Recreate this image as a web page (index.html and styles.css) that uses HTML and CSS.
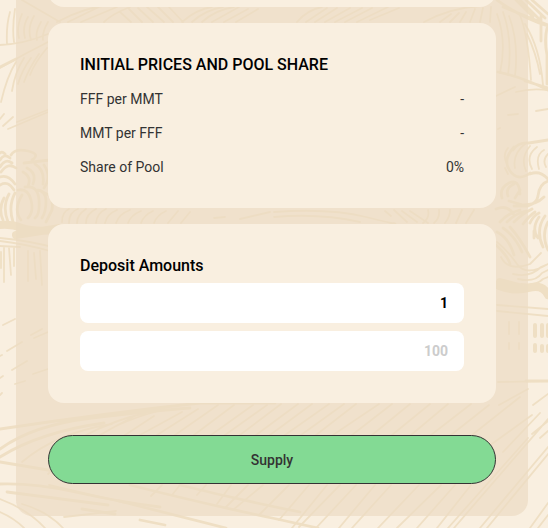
FILE: index.html
```html
<!DOCTYPE html>
<html lang="en">
<head>
<meta charset="utf-8">
<meta name="viewport" content="width=device-width, initial-scale=1">
<title>Add liquidity</title>
<link rel="stylesheet" href="styles.css">
</head>
<body>
<svg class="scenery" viewBox="0 0 548 528" preserveAspectRatio="xMidYMin slice" aria-hidden="true">
  <!-- sky and foliage, left -->
  <path class="thin" d="M10 12Q6 26 7 44M15 9Q12 28 14 42M22 14Q16 28 19 38M28 17Q22 27 25 38M34 16Q27 28 31 40M41 22Q35 32 37 40M48 22Q42 32 43 40M0 45Q24 44 48 34M22 0L60 22M0 68Q24 54 48 42M16 62Q7 76 1 102M24 58Q15 72 12 91M31 58Q22 70 18 84M39 54Q29 68 24 82M47 48Q35 62 30 75M0 119L4 114M3 126L13 117M8 129L60 107M17 122L50 109"/>
  <path class="stroke" d="M0 67L16 59M0 153Q2 151 5 154M0 160Q4 153 10 158M0 167Q5 158 12 163M1 172Q8 162 16 168M0 177Q8 174 15 184M0 185Q8 180 14 190M11 155Q15 148 28 151T32 160M24 163L50 160M4 198Q-2 209 3 220M9 194Q2 207 8 222M15 193Q8 206 13 222M22 195Q13 210 21 220M27 168Q37 173 33 184M23 172Q32 177 28 186M35 164Q45 170 43 184M44 165Q52 177 44 188M18 190Q28 188 31 200T28 218M25 187Q38 185 39 200T35 218M36 190Q46 190 46 201T42 218M45 193Q54 196 52 210L46 222"/>
  <path class="wide" d="M0 225Q12 224 22 228T60 230M16 235L60 228"/>
  <path class="thin" d="M0 238Q32 241 60 249M0 241Q25 244 50 251M0 246L20 247M4 248V282M9 248L11 275M14 248V266M28 251V281M34 253L36 279M40 251L42 285M1 252V268"/>
  <!-- foliage between the cards -->
  <path class="thin" d="M57 22Q85 7 110 5M68 22L101 6M81 22L117 7M104 22Q112 14 130 7M120 12L131 22M129 9L142 22M138 8L153 22M147 7L164 22M158 7L173 22M169 7L183 22M182 22Q197 9 212 7M192 22Q205 10 223 7M202 22Q215 10 234 7M212 22L239 7M224 22L248 9M236 22L258 9M297 22Q307 10 322 7M306 22L327 8M315 22L337 8M325 22L350 8M335 22L362 8M345 22L372 8M357 22L388 7M370 20L399 8M424 22Q450 8 480 6M440 22L451 14M450 22L459 13M460 22L466 12M470 22L475 9M480 22L483 8M490 22L491 7"/>
  <path class="thin" d="M62 222Q62 212 69 209M69 223Q69 212 78 209M77 223Q77 215 86 209M86 223Q86 214 96 209M96 223Q97 213 106 209M105 223Q107 214 117 210M116 223Q119 214 130 210M128 223Q131 215 141 211M141 223Q144 215 153 211M154 223Q157 215 166 211M168 223L178 211M181 223L190 212M214 218L225 217M240 219L270 212M274 212Q330 208 366 217T394 223M274 217Q320 213 360 222M385 211L391 216M394 210L407 222M402 211L417 222M410 211L428 223M423 223Q430 218 428 210M434 223Q440 218 439 210M445 223Q450 217 450 210M456 223L462 210M466 223L474 210"/>
  <!-- trees and roofs, right -->
  <path class="stroke" d="M497 0Q520 17 548 26M503 7L548 25M498 72Q522 77 548 90M525 81L548 88M516 0L533 17M520 0L540 20M526 0L545 18M532 0L548 14M541 16V41M547 28Q544 40 547 55V84M513 150Q518 142 529 143L548 140M514 147Q502 160 510 171T530 173M530 174Q540 170 548 179M548 181Q539 184 538 196Q537 203 528 206H514M509 201L523 205Q536 205 544 197"/>
  <path class="thin" d="M497 14Q507 41 500 73M503 12Q513 40 508 75M509 16Q519 42 515 76M519 13Q528 33 531 80M525 24Q540 48 543 85M527 34Q536 53 540 74M496 96L515 87M516 92Q530 88 548 90M508 115L518 114M536 111L548 109M498 129L500 128M526 143Q512 154 515 168M530 146Q520 158 526 171M537 147Q525 156 532 169M544 150Q535 155 539 169M548 154Q542 160 546 167M508 148Q502 155 507 164M505 168L508 174"/>
  <path class="stroke" d="M502 198Q499 188 509 183T520 194M508 196Q505 188 514 184M515 198L520 190M496 209Q508 204 514 215M500 222Q508 213 520 210M507 222Q516 213 526 211M514 222Q522 214 532 209M523 224Q529 216 535 212M530 223Q533 216 539 213M539 217Q531 229 538 238M545 216Q535 230 543 247M548 222Q541 235 548 250M534 231V238M497 232Q509 238 514 255M503 228Q515 236 522 252M510 227Q520 238 530 257M495 244Q508 256 510 264"/>
  <path class="wide" d="M499 286Q515 292 529 288T548 295M500 282L519 287"/>
  <path class="thin" d="M497 242Q508 251 517 264T548 264M501 257Q508 272 530 264L541 253M513 274Q530 278 541 267L548 264M518 279Q535 283 542 273L548 270M521 284Q536 286 543 279L548 277M497 305L548 309M497 311L548 316M498 382L548 381M509 322V334M519 322V334M509 343V349M519 343V349"/>
  <path class="window" d="M535 325V336M542 325V336M548 325V336M535 345V351M542 346V351M548 346V351"/>
  <path class="stroke" d="M526 381H548"/>
  <!-- fields, left -->
  <path class="thin" d="M3 325L15 319M0 356L2 355M7 351L22 342M31 335L42 329M34 338L60 327M12 370L27 361M33 374L60 365M0 378L3 376M15 384L25 381M0 395L2 393"/>
  <path class="stroke" d="M0 429Q100 414 200 403H275M0 449Q33 425 92 418T190 408M0 457Q40 432 104 423M0 462L60 472M0 484Q35 483 75 492T160 507M7 492L108 505M82 509L115 514M140 520L165 525"/>
  <path class="thin" d="M22 462Q56 433 112 424M48 474Q91 437 139 414M86 435Q117 419 146 413M100 435Q125 419 166 409M125 435L154 416M140 435L182 412M157 435L198 409M175 435L218 405M0 512Q14 518 24 528M0 499Q27 509 45 528M22 504Q47 511 63 528M64 517L116 511M49 485L126 503"/>
  <!-- ploughed hill -->
  <path class="stroke" d="M130 485Q205 504 272 518L318 528M119 501L226 528M180 485Q240 500 300 512"/>
  <path class="thin" d="M151 496L162 485M172 495L180 485M197 495L206 485M217 504L231 485M225 508L248 485M233 510L263 485M260 514L289 485M279 520L309 485M292 528L327 485M299 527L340 485M316 528L356 485M339 528L375 485M352 528L391 485M378 528L419 485M397 528L441 485M417 528L455 485M437 528L471 485M448 528L528 438M454 528L548 419M480 528L548 447M487 528L548 454M530 528L548 503M538 528L548 515M194 435L234 405M211 435L253 405M225 435L267 405M240 435L281 404M256 435L298 404M270 435L312 404M285 435L329 404M301 435L344 404M316 435L356 404M333 435L379 404M352 435L392 404M372 435L410 404M392 435L430 404M411 435L448 404M431 435L471 404M451 435L489 405M472 435L520 397M489 446L532 415M503 452L540 413M533 405L548 394M532 434L548 421M540 438L548 431M499 405L528 389"/>
</svg>
<main class="panel">
  <section class="card card-previous"></section>
  <section class="card card-prices">
    <h2 class="title">INITIAL PRICES AND POOL SHARE</h2>
    <dl class="rates">
      <div class="rate"><dt>FFF per MMT</dt><dd>-</dd></div>
      <div class="rate"><dt>MMT per FFF</dt><dd>-</dd></div>
      <div class="rate"><dt>Share of Pool</dt><dd>0%</dd></div>
    </dl>
  </section>
  <section class="card card-deposit">
    <h2 class="title">Deposit Amounts</h2>
    <input class="amount" type="text" inputmode="decimal" aria-label="FFF amount" value="1">
    <input class="amount" type="text" inputmode="decimal" aria-label="MMT amount" placeholder="100">
  </section>
  <button class="supply" type="button">Supply</button>
</main>
</body>
</html>
```
FILE: styles.css
```css
* {
  box-sizing: border-box;
}

body {
  margin: 0;
  position: relative;
  min-height: 100vh;
  overflow: hidden;
  background: #f9efe0;
  color: #333;
  font: 14px/18px Roboto, "Liberation Sans", sans-serif;
}

.scenery {
  position: absolute;
  inset: 0;
  width: 100%;
  height: 100%;
  fill: none;
  stroke: #efdfc4;
  stroke-linecap: round;
  stroke-linejoin: round;
}

.thin { stroke-width: 1.8; }
.stroke { stroke-width: 2.8; }
.wide { stroke-width: 8; }
.window { stroke-width: 4; }

.panel {
  position: relative;
  display: flex;
  flex-direction: column;
  gap: 16px;
  margin: 0 20px 12px 16px;
  padding: 0 32px 32px;
  border-radius: 0 0 16px 16px;
  background: rgba(236, 220, 195, 0.7);
}

.card {
  display: flex;
  flex-direction: column;
  padding: 32px;
  border-radius: 16px;
  background: #f9efe0;
}

/* scrolled almost out of view */
.card-previous {
  height: 64px;
  margin-top: -57px;
}

.card-prices { gap: 16px; }
.card-deposit { gap: 8px; }

.title {
  margin: 0;
  color: #000;
  font-size: 16px;
  font-weight: 500;
  line-height: 19px;
}

.rates {
  display: flex;
  flex-direction: column;
  gap: 16px;
  margin: 0;
}

.rate {
  display: flex;
  justify-content: space-between;
}

.rate dd { margin: 0; }

.amount {
  width: 100%;
  height: 40px;
  padding: 0 16px;
  border: 0;
  border-radius: 8px;
  background: #fff;
  color: #000;
  font: inherit;
  font-weight: 700;
  text-align: right;
}

.amount::placeholder {
  color: #ccc;
  opacity: 1;
}

.supply {
  height: 49px;
  margin-top: 16px;
  border: 1px solid #333;
  border-radius: 25px;
  background: #83da94;
  color: #333;
  font: inherit;
  font-weight: 500;
}
```
